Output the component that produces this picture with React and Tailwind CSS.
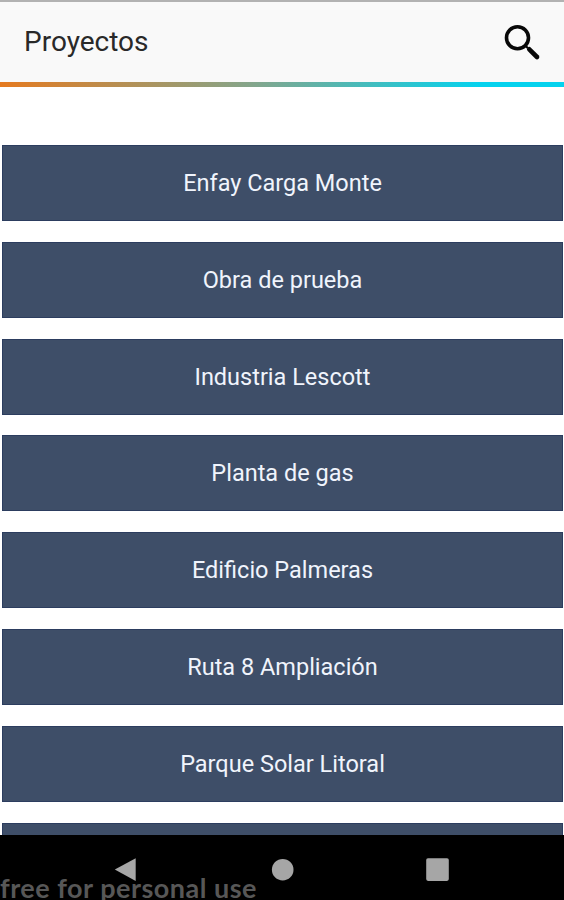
import { useState } from "react";

const projects = [
  "Enfay Carga Monte",
  "Obra de prueba",
  "Industria Lescott",
  "Planta de gas",
  "Edificio Palmeras",
  "Ruta 8 Ampliación",
  "Parque Solar Litoral",
  "",
];

function SearchIcon() {
  return (
    <svg className="w-10 h-10" viewBox="0 0 40 40" fill="none" stroke="#080808">
      <circle cx="15.5" cy="15.7" r="11" strokeWidth="3.6" />
      <path d="M23.5 23.7 L26 26.2" strokeWidth="2.2" />
      <path d="M27.3 27.3 L35 35" strokeWidth="4.6" strokeLinecap="round" />
    </svg>
  );
}

function Header() {
  return (
    <header className="shrink-0">
      <div className="h-[82px] flex items-center justify-between pl-6 pr-[22px] bg-[#f9f9f9] border-t-2 border-[#b2b2b2]">
        <h1 className="text-[28px] leading-8 text-[#292929]">Proyectos</h1>
        <button aria-label="Buscar">
          <SearchIcon />
        </button>
      </div>
      <div className="h-[5px] bg-linear-to-r/srgb from-[#e57a1f] via-[#83a68c] via-45% to-[#05d2ee] to-85%" />
    </header>
  );
}

function NavBar() {
  return (
    <nav className="h-[65px] shrink-0 relative bg-black overflow-hidden">
      <svg className="w-full h-full" viewBox="0 0 564 65" fill="#a6a6a6">
        <path d="M135.7 23.2 V46 L114.8 34.6 Z" />
        <circle cx="282.7" cy="34.7" r="10.8" />
        <rect x="426.2" y="23.3" width="22.6" height="22.6" rx="1.8" />
      </svg>
      <span className="absolute left-0 top-[37px] text-[27px] leading-8 tracking-[0.5px] font-bold whitespace-nowrap text-[#575757] font-['Lato',sans-serif]">
        free for personal use
      </span>
    </nav>
  );
}

export default function App() {
  const [selected, setSelected] = useState(null);

  return (
    <div className="w-full h-screen flex flex-col bg-white overflow-hidden font-['Roboto',sans-serif]">
      <Header />

      {/* Project list */}
      <main className="flex-1 min-h-0 overflow-hidden pt-[58px] pl-0.5 pr-px">
        <ul className="flex flex-col gap-[20.8px]">
          {projects.map((name, index) => (
            <li key={index}>
              <button
                onClick={() => setSelected(index)}
                aria-pressed={selected === index}
                className="w-full h-[76px] flex items-center justify-center bg-[#3e4e68] border border-[#2c3d5f] text-[23.5px] leading-7 text-[#f0f4fc]"
              >
                {name}
              </button>
            </li>
          ))}
        </ul>
      </main>

      <NavBar />
    </div>
  );
}
